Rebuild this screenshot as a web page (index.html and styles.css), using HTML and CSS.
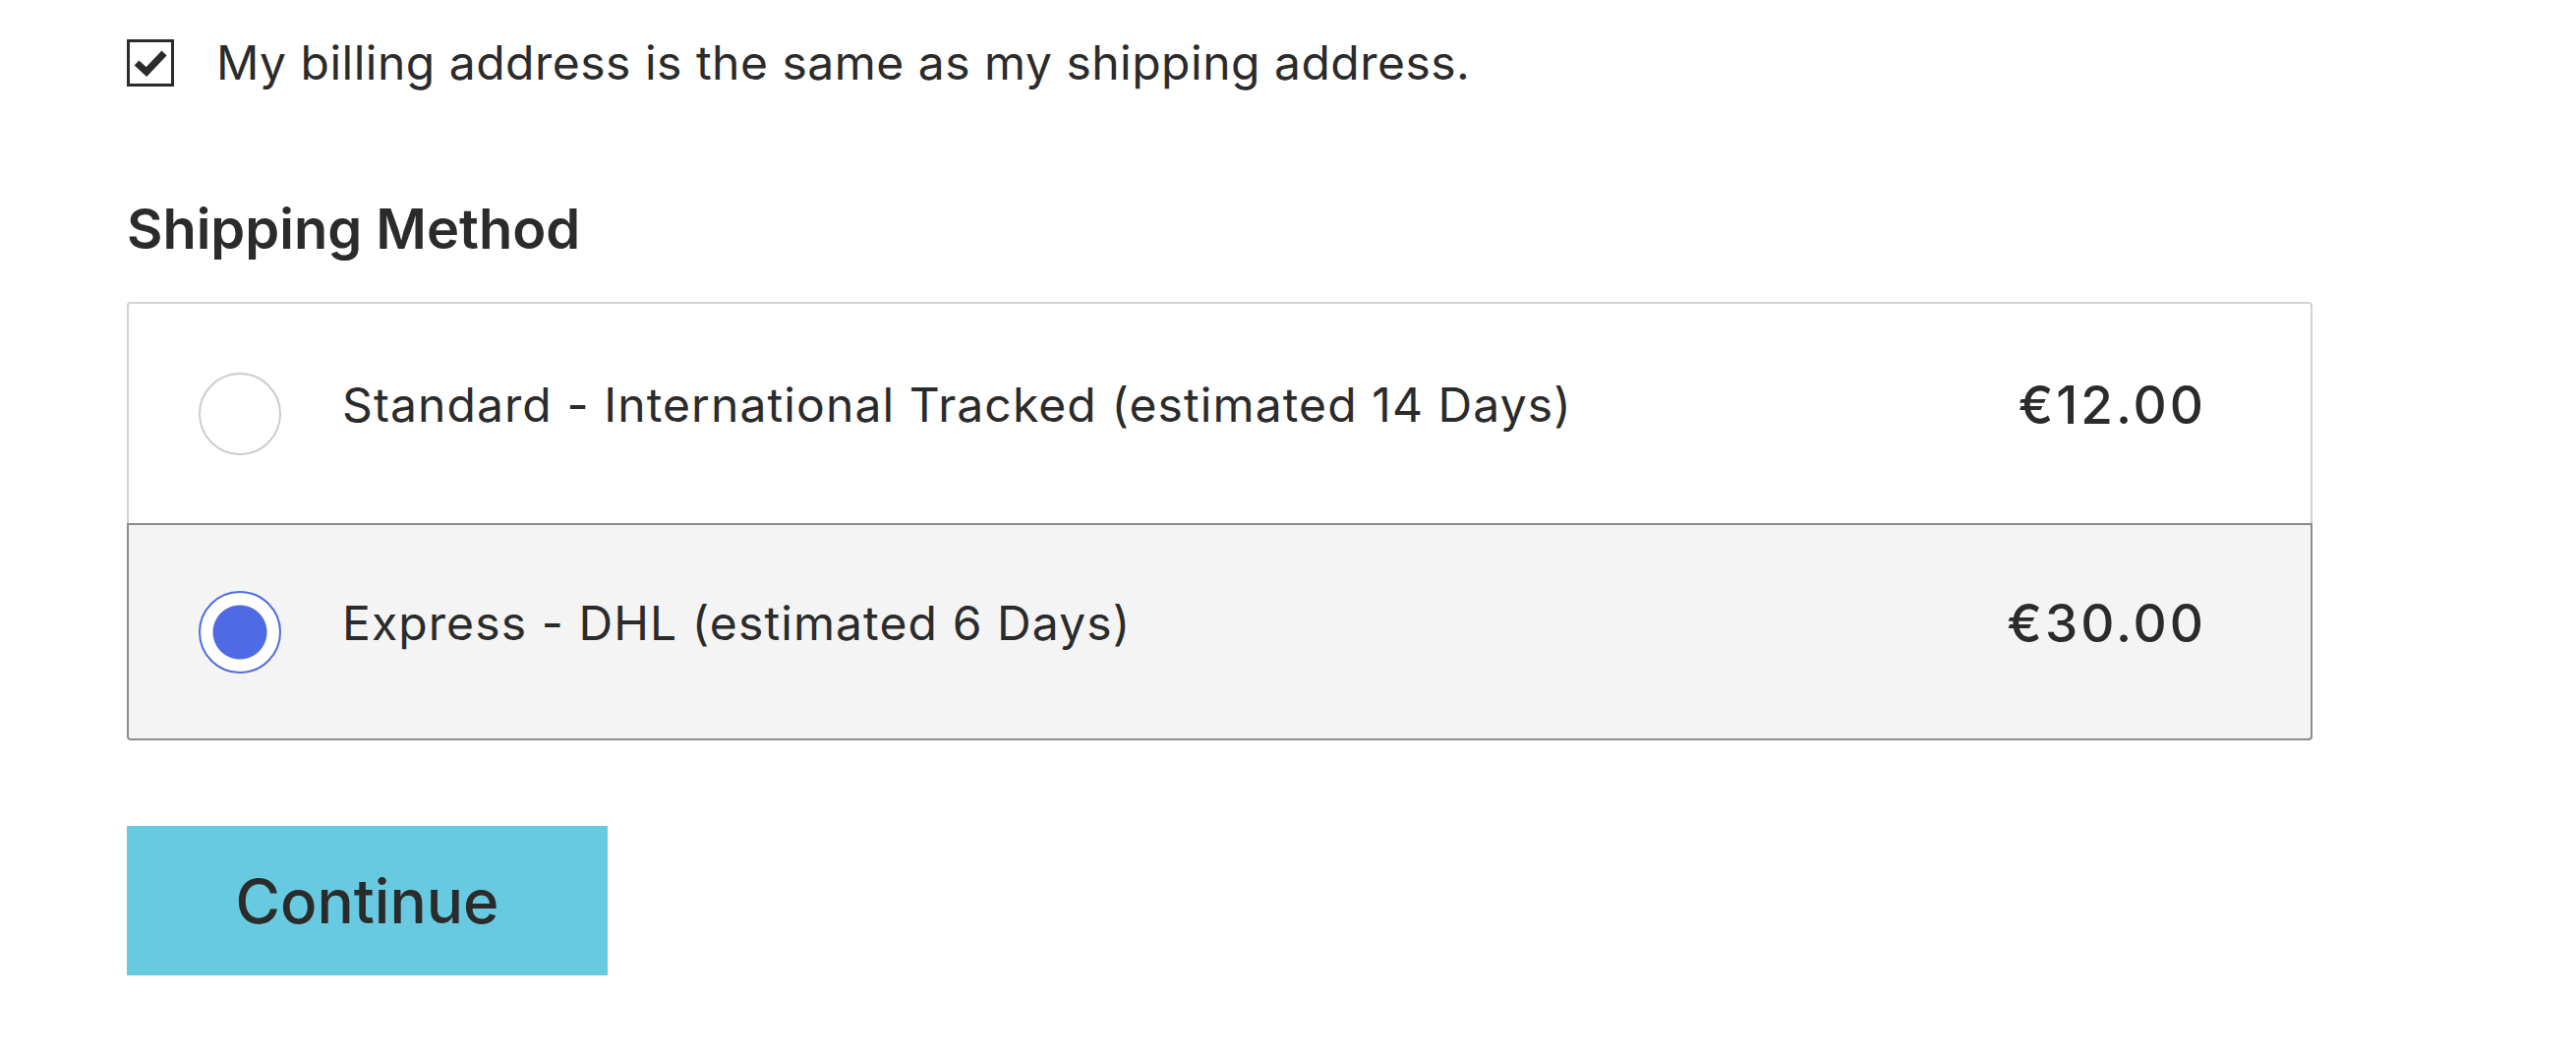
FILE: index.html
```html
<!DOCTYPE html>
<html lang="en">
<head>
<meta charset="utf-8">
<title>Shipping Method</title>
<link rel="stylesheet" href="styles.css">
</head>
<body>
<main class="page">
  <label class="billing">
    <span class="check">
      <svg viewBox="0 0 42 42" width="42" height="42" aria-hidden="true">
        <path d="M7 21 L17 30 L35 11" fill="none" stroke="#2b2b2b" stroke-width="7" stroke-linejoin="miter"/>
      </svg>
    </span>
    <span class="billing-text">My billing address is the same as my shipping address.</span>
  </label>

  <h2 class="heading">Shipping Method</h2>

  <div class="methods">
    <div class="method">
      <span class="radio"></span>
      <span class="method-name">Standard - International Tracked (estimated 14 Days)</span>
      <span class="method-price">€12.00</span>
    </div>
    <div class="method method-selected">
      <span class="radio radio-checked"></span>
      <span class="method-name">Express - DHL (estimated 6 Days)</span>
      <span class="method-price">€30.00</span>
    </div>
  </div>

  <button class="continue" type="button">Continue</button>
</main>
</body>
</html>
```

FILE: styles.css
```css
html, body {
  margin: 0;
  padding: 0;
  background: #ffffff;
}

body {
  font-family: "Inter", "Open Sans", sans-serif;
  color: #2b2b2b;
}

.page {
  padding: 40px 0 0 129px;
  width: 2223px;
}

.billing {
  display: flex;
  align-items: center;
  gap: 43px;
  height: 48px;
}

.check {
  box-sizing: border-box;
  width: 48px;
  height: 48px;
  border: 3px solid #2b2b2b;
  display: flex;
  align-items: center;
  justify-content: center;
}

.billing-text {
  font-size: 48px;
  font-weight: 400;
  line-height: 48px;
  letter-spacing: 0.5px;
}

.heading {
  margin: 111px 0 40px 0;
  font-size: 56px;
  line-height: 68px;
  font-weight: 600;
  letter-spacing: 0;
}

.methods {
  display: flex;
  flex-direction: column;
}

.method {
  box-sizing: border-box;
  height: 225px;
  display: flex;
  align-items: center;
  padding: 0 106px 0 71px;
  border: 2px solid #d2d2d2;
  border-bottom: none;
  border-radius: 4px 4px 0 0;
  background: #ffffff;
}

.method-selected {
  height: 221px;
  border: 2px solid #8c8c8c;
  border-radius: 0 0 4px 4px;
  background: #f4f4f4;
}

.radio {
  box-sizing: border-box;
  flex: none;
  width: 84px;
  height: 84px;
  border-radius: 50%;
  border: 2px solid #cccccc;
  background: #ffffff;
  margin-right: 62px;
}

.radio-checked {
  border-color: #4e6be5;
  background: radial-gradient(circle, #4e6be5 0 27px, #ffffff 28px);
}

.method-name {
  flex: 1;
  font-size: 48px;
  font-weight: 400;
  letter-spacing: 1.1px;
  margin-bottom: 18px;
}

.method-price {
  font-size: 53px;
  font-weight: 500;
  letter-spacing: 3px;
  margin-bottom: 18px;
}

.continue {
  display: block;
  margin-top: 87px;
  width: 489px;
  height: 152px;
  border: none;
  background: #67cae1;
  color: #2b2b2b;
  font-family: "Inter", "Open Sans", sans-serif;
  font-size: 62px;
  font-weight: 500;
  padding: 0;
}
```
